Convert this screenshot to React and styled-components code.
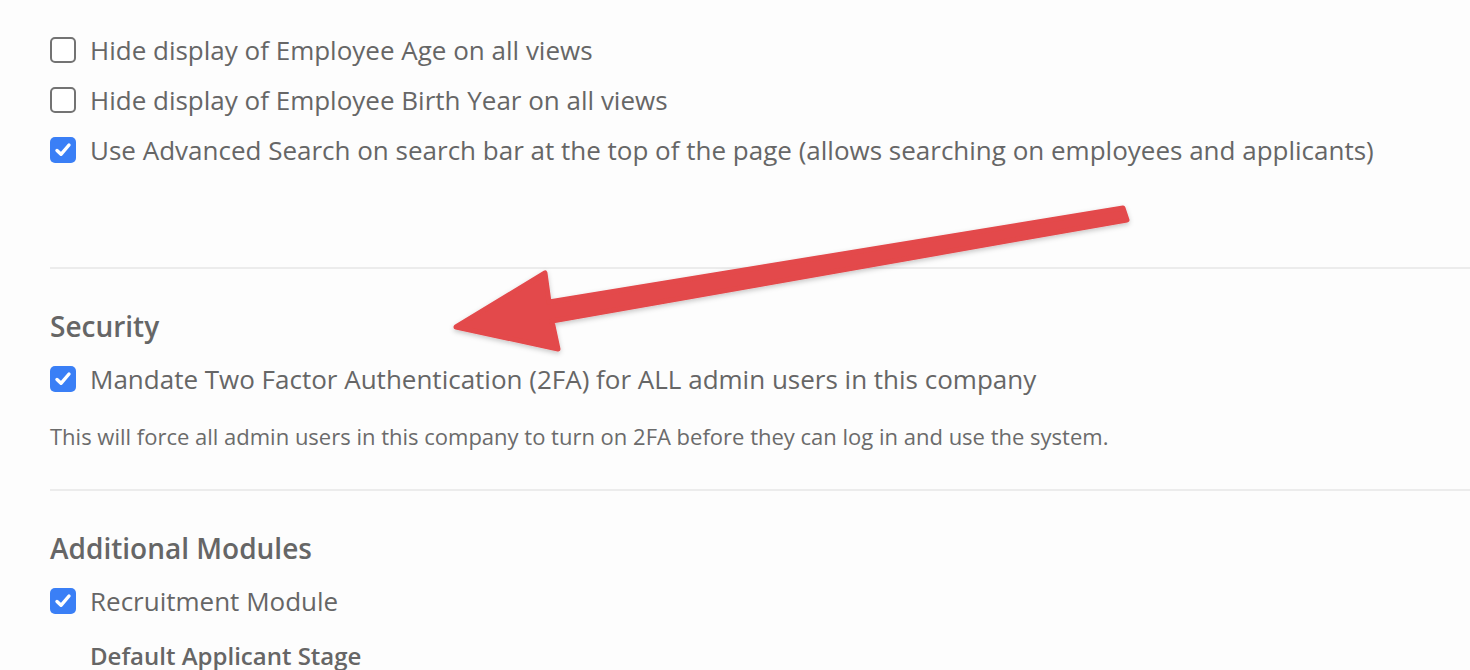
import React from 'react'
import styled, { createGlobalStyle } from 'styled-components'

const GlobalStyle = createGlobalStyle`
  html, body {
    margin: 0;
    padding: 0;
    background: #fdfdfd;
  }
  body {
    font-family: 'Open Sans', 'Liberation Sans', sans-serif;
    color: #666;
  }
`

const StyledRoot = styled.main`
  position: relative;
  min-height: 670px;
  padding: 25px 0 0 50px;
  box-sizing: border-box;
  overflow: hidden;
`

const StyledOptions = styled.div`
  display: flex;
  flex-direction: column;
`

const StyledRow = styled.label`
  display: flex;
  align-items: center;
  gap: 14px;
  height: 50px;
  font-size: 26px;
  color: #666;
`

const StyledBox = styled.span`
  flex: 0 0 auto;
  width: 26px;
  height: 26px;
  box-sizing: border-box;
  border-radius: 5px;
  display: flex;
  align-items: center;
  justify-content: center;
  border: ${(p) => (p.checked ? 'none' : '2px solid #737373')};
  background: ${(p) => (p.checked ? '#3a7ff6' : '#fff')};
`

const StyledSection = styled.section`
  border-top: 2px solid #ececec;
  margin-top: ${(p) => p.gap}px;
  padding-top: 37px;
`

const StyledHeading = styled.h2`
  margin: 0 0 8px;
  font-size: 28px;
  line-height: 40px;
  font-weight: 600;
  color: #666;
`

const StyledHelp = styled.p`
  margin: 17px 0 0;
  font-size: 22px;
  line-height: 30px;
  color: #6b6b6b;
`

const StyledSubHeading = styled.div`
  margin: 12px 0 0 40px;
  font-size: 24px;
  line-height: 36px;
  font-weight: 600;
  color: #666;
`

const StyledArrow = styled.svg`
  position: absolute;
  left: 0;
  top: 0;
  pointer-events: none;
`

const Checkbox = ({ checked }) => (
  <StyledBox checked={checked}>
    {checked && (
      <svg width="20" height="20" viewBox="0 0 20 20">
        <path
          d="M4 10.5 L8 14.3 L16 5"
          fill="none"
          stroke="#fff"
          strokeWidth="3.4"
          strokeLinecap="round"
          strokeLinejoin="round"
        />
      </svg>
    )}
  </StyledBox>
)

const Option = ({ checked, children }) => (
  <StyledRow>
    <Checkbox checked={checked} />
    <span>{children}</span>
  </StyledRow>
)

const Arrow = () => (
  <StyledArrow width="1470" height="670" viewBox="0 0 1470 670">
    <defs>
      <filter id="arrowShadow" x="-10%" y="-20%" width="120%" height="140%">
        <feDropShadow dx="0" dy="2" stdDeviation="2.5" floodColor="#000" floodOpacity="0.22" />
      </filter>
    </defs>
    <path
      d="M456 327 L545 273 L549 302 L1123 208 L1127 220 L552 321 L558 349 Z"
      fill="#e3494b"
      stroke="#e3494b"
      strokeWidth="5"
      strokeLinejoin="round"
      filter="url(#arrowShadow)"
    />
  </StyledArrow>
)

const App = () => (
  <StyledRoot>
    <GlobalStyle />
    <StyledOptions>
      <Option>Hide display of Employee Age on all views</Option>
      <Option>Hide display of Employee Birth Year on all views</Option>
      <Option checked>
        Use Advanced Search on search bar at the top of the page (allows searching on employees and
        applicants)
      </Option>
    </StyledOptions>
    <StyledSection gap={92}>
      <StyledHeading>Security</StyledHeading>
      <Option checked>Mandate Two Factor Authentication (2FA) for ALL admin users in this company</Option>
      <StyledHelp>
        This will force all admin users in this company to turn on 2FA before they can log in and use
        the system.
      </StyledHelp>
    </StyledSection>
    <StyledSection gap={38}>
      <StyledHeading>Additional Modules</StyledHeading>
      <Option checked>Recruitment Module</Option>
      <StyledSubHeading>Default Applicant Stage</StyledSubHeading>
    </StyledSection>
    <Arrow />
  </StyledRoot>
)

export default App
